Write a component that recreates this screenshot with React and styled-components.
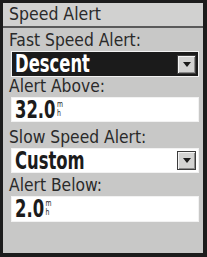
import styled, { createGlobalStyle } from "styled-components";

const Global = createGlobalStyle`
  html, body { margin: 0; padding: 0; background: #ffffff; }
`;

const Screen = styled.div`
  box-sizing: border-box;
  width: 207px;
  height: 257px;
  border-style: solid;
  border-color: #1c1c1c;
  border-width: 3px 4px 4px 3px;
  background: #c8c8c7;
  display: flex;
  flex-direction: column;
  font-family: "DejaVu Sans Condensed", "Liberation Sans", sans-serif;
  color: #2a2a2a;
`;

const TitleBar = styled.div`
  box-sizing: border-box;
  height: 25px;
  padding: 0 0 2px 6px;
  display: flex;
  align-items: center;
  background: #d1d1d0;
  border-bottom: 2px solid #5a5a5a;
  font-size: 17.5px;
`;

const Body = styled.div`
  display: flex;
  flex-direction: column;
  padding: 0 4px 0 8px;
`;

const Label = styled.div`
  box-sizing: border-box;
  height: ${(p) => p.$h}px;
  margin-left: -2px;
  display: flex;
  align-items: flex-end;
  padding-bottom: 2px;
  font-size: 17.3px;
  line-height: 17px;
`;

const Field = styled.div`
  box-sizing: border-box;
  height: ${(p) => p.$h || 25}px;
  display: flex;
  align-items: center;
  justify-content: space-between;
  padding: 0 2px 0 3px;
  border: 1px solid #f2f2f2;
  background: ${(p) => (p.$dark ? "#1b1b1b" : "#ffffff")};
  color: ${(p) => (p.$dark ? "#ffffff" : "#1b1b1b")};
  overflow: hidden;
`;

const Value = styled.span`
  display: inline-flex;
  align-items: flex-start;
  transform: scaleX(0.76);
  transform-origin: left center;
  font-family: "DejaVu Sans Condensed", "DejaVu Sans", sans-serif;
  font-weight: bold;
  font-size: 24px;
  line-height: 20px;
`;

const Unit = styled.span`
  display: flex;
  flex-direction: column;
  font-weight: normal;
  font-size: 9px;
  line-height: 9px;
  margin: 0 0 0 2px;
`;

const ArrowBtn = styled.div`
  width: 19px;
  height: 19px;
  flex: none;
  box-sizing: border-box;
  background: #d3d3d2;
  border: 1px solid #3c3c3c;
  box-shadow: inset 1px 1px 0 #f4f4f4, inset -1px -1px 0 #8a8a8a;
  display: flex;
  align-items: center;
  justify-content: center;
`;

function Select({ value, dark, h }) {
  return (
    <Field $dark={dark} $h={h}>
      <Value>{value}</Value>
      <ArrowBtn>
        <svg width="8" height="5" viewBox="0 0 8 5">
          <polygon points="0,0 8,0 4,5" fill="#1b1b1b" />
        </svg>
      </ArrowBtn>
    </Field>
  );
}

function Speed({ value, h }) {
  return (
    <Field $h={h}>
      <Value>
        {value}
        <Unit>
          <span>m</span>
          <span>h</span>
        </Unit>
      </Value>
    </Field>
  );
}

export default function App() {
  return (
    <>
      <Global />
      <Screen>
        <TitleBar>Speed Alert</TitleBar>
        <Body>
          <Label $h={23}>Fast Speed Alert:</Label>
          <Select value="Descent" dark h={26} />
          <Label $h={20}>Alert Above:</Label>
          <Speed value="32.0" />
          <Label $h={26}>Slow Speed Alert:</Label>
          <Select value="Custom" />
          <Label $h={23}>Alert Below:</Label>
          <Speed value="2.0" h={26} />
        </Body>
      </Screen>
    </>
  );
}
